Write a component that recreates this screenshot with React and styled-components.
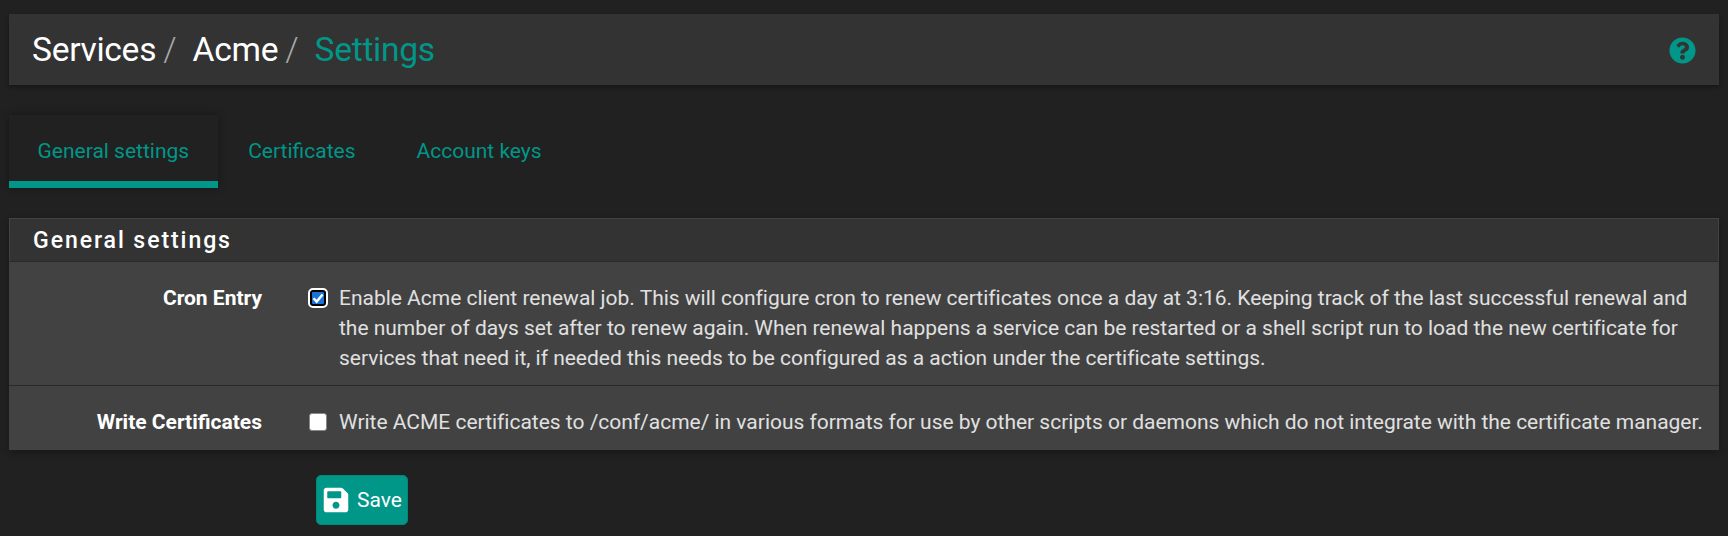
import React from "react";
import styled, { createGlobalStyle } from "styled-components";
import { FaSave, FaQuestionCircle } from "react-icons/fa";

const Global = createGlobalStyle`
  html, body { margin: 0; padding: 0; background: #212121; }
  body { font-family: Roboto, "Liberation Sans", sans-serif; color: #e0e0e0; overflow: hidden; }
`;

const Page = styled.div`
  padding: 14px 9px 0;
  height: 536px;
  box-sizing: border-box;
`;

const TitleBar = styled.header`
  height: 71px;
  background: #333333;
  box-shadow: 0 2px 4px rgba(0, 0, 0, 0.35);
  display: flex;
  align-items: center;
  justify-content: space-between;
  padding: 0 23px 0 23px;
`;

const Crumbs = styled.ol`
  display: flex;
  align-items: baseline;
  margin: 0;
  padding: 0;
  list-style: none;
  font-size: 33.6px;
  font-weight: 400;
  letter-spacing: -0.3px;
`;

const Crumb = styled.li`
  color: ${(p) => (p.$active ? "#009688" : "#ffffff")};
`;

const Slash = styled.span`
  color: #a8a8a8;
  font-weight: 300;
  margin: 0 16.4px 0 7px;
`;

const Help = styled.span`
  display: flex;
  color: #009688;
  font-size: 27px;
  padding-top: 2px;
`;

const Tabs = styled.nav`
  display: flex;
  margin: 30px 0 30px;
  height: 73px;
`;

const Tab = styled.a`
  display: flex;
  align-items: center;
  justify-content: center;
  box-sizing: border-box;
  padding: 6px ${(p) => (p.$active ? "28.5px" : "30.5px")} 0;
  font-size: 21px;
  color: #009688;
  border-bottom: 7px solid ${(p) => (p.$active ? "#009688" : "transparent")};
  box-shadow: ${(p) => (p.$active ? "0 0 8px rgba(0,0,0,0.35)" : "none")};
`;

const Panel = styled.section`
  background: #424242;
  box-shadow: 0 3px 8px rgba(0, 0, 0, 0.3);
`;

const PanelHeading = styled.h2`
  margin: 0;
  height: 44px;
  box-sizing: border-box;
  background: #333333;
  border: 1px solid #424242;
  border-bottom: 1px solid #2a2a2a;
  padding-left: 23px;
  display: flex;
  align-items: center;
  font-size: 23.1px;
  font-weight: 500;
  letter-spacing: 1.9px;
  color: #ffffff;
`;

const Row = styled.div`
  display: grid;
  grid-template-columns: 253px 1fr;
  column-gap: 47px;
  padding: 21px 0 ${(p) => (p.$last ? "13px" : "12px")};
  border-top: ${(p) => (p.$first ? "none" : "1px solid #2a2a2a")};
`;

const Label = styled.div`
  text-align: right;
  font-size: 21px;
  line-height: 30px;
  font-weight: 700;
  color: #ffffff;
`;

const Field = styled.label`
  display: flex;
  font-size: 21px;
  line-height: 30px;
  letter-spacing: -0.015px;
  color: #e0e0e0;
  margin-right: 14px;
`;

const CheckOn = styled.input.attrs({ type: "checkbox" })`
  appearance: none;
  flex: none;
  box-sizing: border-box;
  width: 16px;
  height: 16px;
  margin: 7px 13px 0 1px;
  background-color: #1a73d9;
  background-image: url("data:image/svg+xml,%3Csvg xmlns='http://www.w3.org/2000/svg' viewBox='0 0 12 12'%3E%3Cpath d='M1.5 6.2 4.7 9.6 10.6 2.4' fill='none' stroke='white' stroke-width='2.4'/%3E%3C/svg%3E");
  background-size: 100% 100%;
  border: 2px solid #000;
  border-radius: 3px;
  outline: 2px solid #fff;
  outline-offset: 0;
`;

const CheckOff = styled.input.attrs({ type: "checkbox" })`
  appearance: none;
  flex: none;
  box-sizing: border-box;
  width: 18px;
  height: 18px;
  margin: 6px 12px 0 0;
  background: #ffffff;
  border: 1px solid #8a8a8a;
  border-radius: 3px;
`;

const Actions = styled.div`
  padding: 25px 0 0 307px;
`;

const SaveButton = styled.button`
  display: inline-flex;
  align-items: center;
  gap: 7px;
  width: 92px;
  height: 50px;
  box-sizing: border-box;
  padding: 0 0 0 5px;
  background: #009688;
  color: #ffffff;
  border: 1px solid #00897b;
  border-radius: 5px;
  font-family: inherit;
  font-size: 21px;
  svg { font-size: 28px; flex: none; }
`;

export default function App() {
  return (
    <Page>
      <Global />
      <TitleBar>
        <Crumbs>
          <Crumb>Services<Slash>/</Slash></Crumb>
          <Crumb>Acme<Slash>/</Slash></Crumb>
          <Crumb $active>Settings</Crumb>
        </Crumbs>
        <Help><FaQuestionCircle /></Help>
      </TitleBar>
      <Tabs>
        <Tab $active>General settings</Tab>
        <Tab>Certificates</Tab>
        <Tab>Account keys</Tab>
      </Tabs>
      <Panel>
        <PanelHeading>General settings</PanelHeading>
        <Row $first>
          <Label>Cron Entry</Label>
          <Field>
            <CheckOn defaultChecked />
            <span>Enable Acme client renewal job. This will configure cron to renew certificates once a day at 3:16. Keeping track of the last successful renewal and the number of days set after to renew again. When renewal happens a service can be restarted or a shell script run to load the new certificate for services that need it, if needed this needs to be configured as a action under the certificate settings.</span>
          </Field>
        </Row>
        <Row $last>
          <Label>Write Certificates</Label>
          <Field>
            <CheckOff />
            <span>Write ACME certificates to /conf/acme/ in various formats for use by other scripts or daemons which do not integrate with the certificate manager.</span>
          </Field>
        </Row>
      </Panel>
      <Actions>
        <SaveButton><FaSave />Save</SaveButton>
      </Actions>
    </Page>
  );
}
